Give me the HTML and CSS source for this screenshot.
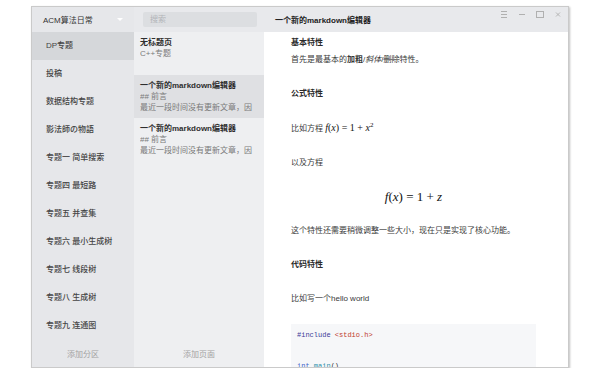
FILE: index.html
```html
<!DOCTYPE html>
<html lang="zh-CN">
<head>
    <meta charset="UTF-8">
    <meta name="viewport" content="width=device-width, initial-scale=1.0">
    <title>ACM算法日常</title>
    <link rel="stylesheet" href="styles.css">
</head>
<body>

    <div class="window">

        <!-- Notebooks -->
        <aside class="notebooks">
            <div class="nb-head">
                <span>ACM算法日常</span>
                <span class="caret"></span>
            </div>
            <ul class="nb-list">
                <li class="nb-item active">DP专题</li>
                <li class="nb-item">投稿</li>
                <li class="nb-item">数据结构专题</li>
                <li class="nb-item">影法師の物語</li>
                <li class="nb-item">专题一 简单搜索</li>
                <li class="nb-item">专题四 最短路</li>
                <li class="nb-item">专题五 并查集</li>
                <li class="nb-item">专题六 最小生成树</li>
                <li class="nb-item">专题七 线段树</li>
                <li class="nb-item">专题八 生成树</li>
                <li class="nb-item">专题九 连通图</li>
            </ul>
            <div class="col-foot">添加分区</div>
        </aside>

        <!-- Pages -->
        <section class="pages">
            <div class="pages-head">
                <div class="search">搜索</div>
            </div>
            <ul class="page-list">
                <li class="page">
                    <div class="page-title">无标题页</div>
                    <div class="page-line">C++专题</div>
                </li>
                <li class="page active">
                    <div class="page-title">一个新的markdown编辑器</div>
                    <div class="page-line">## 前言</div>
                    <div class="page-line">最近一段时间没有更新文章，因</div>
                </li>
                <li class="page">
                    <div class="page-title">一个新的markdown编辑器</div>
                    <div class="page-line">## 前言</div>
                    <div class="page-line">最近一段时间没有更新文章，因</div>
                </li>
            </ul>
            <div class="col-foot">添加页面</div>
        </section>

        <!-- Editor -->
        <main class="editor">
            <div class="editor-head">
                <span class="doc-title">一个新的markdown编辑器</span>
                <div class="win-ctrls">
                    <svg width="10" height="10" viewBox="0 0 10 10"><path d="M2 2.5h6M2 5.5h6M2 8.5h6" stroke="#b0b0b0" stroke-width="1" fill="none"/></svg>
                    <svg width="10" height="10" viewBox="0 0 10 10"><path d="M2 5.5h6" stroke="#b0b0b0" stroke-width="1" fill="none"/></svg>
                    <svg width="10" height="10" viewBox="0 0 10 10"><rect x="1.5" y="2.5" width="7" height="6" stroke="#b0b0b0" stroke-width="1" fill="none"/></svg>
                    <svg width="10" height="10" viewBox="0 0 10 10"><path d="M3 3.5l4 4M7 3.5l-4 4" stroke="#b0b0b0" stroke-width="0.9" fill="none"/></svg>
                </div>
            </div>

            <article class="doc">
                <p class="heading tight">基本特性</p>
                <p>首先是最基本的<b>加粗</b>/<i class="it">斜体</i>/<del>删除</del>特性。</p>
                <p class="heading">公式特性</p>
                <p>比如方程 <span class="math inline"><i>f</i>(<i>x</i>)<span class="op">=</span>1<span class="op">+</span><i>x</i><sup>2</sup></span></p>
                <p>以及方程</p>
                <p class="math display"><i>f</i>(<i>x</i>)<span class="op">=</span>1<span class="op">+</span><i>z</i></p>
                <p>这个特性还需要稍微调整一些大小，现在只是实现了核心功能。</p>
                <p class="heading">代码特性</p>
                <p>比如写一个hello world</p>
<pre class="code"><span class="c-meta">#include</span> <span class="c-str">&lt;stdio.h&gt;</span>

<span class="c-kw">int</span> <span class="c-fn">main</span>()</pre>
            </article>
        </main>

    </div>

</body>
</html>
```

FILE: styles.css
```css
/* Reset */
* {
    box-sizing: border-box;
}

body {
    margin: 0;
    background: #fff;
    font-family: "Liberation Sans", "Noto Sans CJK SC", sans-serif;
    font-size: 8px;
    color: #333;
}

ul {
    margin: 0;
    padding: 0;
    list-style: none;
}

/* Window frame */
.window {
    margin: 6px 0 0 31px;
    width: 538px;
    height: 362px;
    display: flex;
    border: 1px solid #cacaca;
    box-shadow: 1px 1px 2px rgba(0, 0, 0, 0.25);
    overflow: hidden;
}

/* Notebook column */
.notebooks {
    width: 102px;
    background: #e6e7ea;
    display: flex;
    flex-direction: column;
}

.nb-head {
    height: 25px;
    display: flex;
    align-items: center;
    justify-content: space-between;
    padding: 0 11px 0 11px;
    color: #333;
}

.caret {
    width: 0;
    height: 0;
    border-left: 3px solid transparent;
    border-right: 3px solid transparent;
    border-top: 3px solid #fff;
}

.nb-list {
    flex: 1;
    overflow: hidden;
}

.nb-item {
    height: 28px;
    line-height: 28px;
    padding-left: 14px;
    color: #444;
    font-weight: 500;
    white-space: nowrap;
}

.nb-item.active {
    background: #d5d7da;
}

.col-foot {
    height: 24px;
    line-height: 24px;
    text-align: center;
    color: #a3a3a3;
}

/* Page list column */
.pages {
    width: 130px;
    background: #eeeff1;
    display: flex;
    flex-direction: column;
}

.pages-head {
    height: 25px;
    display: flex;
    align-items: center;
    padding: 0 7px 0 9px;
    background: #e8e9ec;
}

.search {
    flex: 1;
    height: 15px;
    line-height: 15px;
    padding-left: 7px;
    background: #dcdee1;
    border-radius: 2px;
    color: #b2b4b8;
}

.page-list {
    flex: 1;
    overflow: hidden;
}

.page {
    height: 43px;
    padding: 4.5px 6px;
    line-height: 11px;
}

.page.active {
    background: #dfe0e3;
}

.page-title {
    font-weight: bold;
    color: #2e2e2e;
    white-space: nowrap;
}

.page-line {
    color: #7a7a7a;
    white-space: nowrap;
    overflow: hidden;
}

/* Editor column */
.editor {
    flex: 1;
    background: #fff;
    display: flex;
    flex-direction: column;
    min-width: 0;
}

.editor-head {
    height: 25px;
    display: flex;
    align-items: center;
    padding-left: 11px;
    background: #e8e9ec;
}

.doc-title {
    flex: 1;
    font-weight: bold;
    color: #222;
}

.win-ctrls {
    align-self: flex-start;
    display: flex;
    gap: 8px;
    padding: 2px 5px 0 0;
}

.win-ctrls svg {
    display: block;
}

/* Document */
.doc {
    flex: 1;
    padding: 2px 32px 0 27px;
    line-height: 17px;
    color: #3a3a3a;
    overflow: hidden;
}

.doc p {
    margin: 0 0 17px;
    white-space: nowrap;
}

.doc p.tight {
    margin-bottom: 0;
}

.heading {
    font-weight: bold;
    color: #2a2a2a;
}

.it {
    font-family: "Liberation Serif", "Noto Sans CJK SC", serif;
}

del {
    text-decoration-color: #777;
}

.math {
    font-family: "Liberation Serif", serif;
    color: #111;
}

.math.inline {
    font-size: 10px;
}

.math.display {
    font-size: 13px;
    text-align: center;
}

.math .op {
    margin: 0 0.25em;
}

.math sup {
    font-size: 0.7em;
    line-height: 0;
}

/* Code block */
.code {
    margin: 0;
    padding: 4px 6px;
    background: #f6f7f9;
    font-family: "Liberation Mono", "DejaVu Sans Mono", monospace;
    font-size: 7px;
    line-height: 15.5px;
    color: #333;
}

.c-meta {
    color: #3b3b98;
}

.c-str {
    color: #c0392b;
}

.c-kw {
    color: #3a5fc8;
}

.c-fn {
    color: #2a8fa8;
}
```
